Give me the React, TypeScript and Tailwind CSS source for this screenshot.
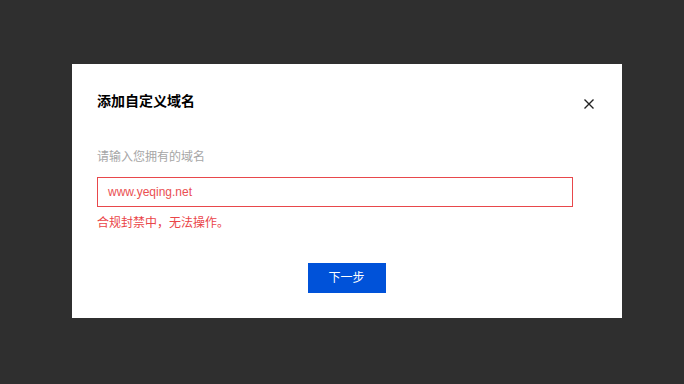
import React from 'react'

const font = { fontFamily: '"Liberation Sans", "Noto Sans CJK SC", sans-serif' }

export default function App() {
  return (
    <div className="w-[684px] h-[384px] bg-[#2f2f2f] pt-[64px] pl-[72px]" style={font}>
      <div className="w-[550px] h-[254px] bg-white flex flex-col px-[25px] pt-[26px]">
        <div className="flex items-center justify-between h-[22px]">
          <div className="text-[14px] leading-[22px] font-bold text-black">添加自定义域名</div>
          <button type="button" className="mr-[2px] mt-[6px] text-[#222]">
            <svg width="12" height="12" viewBox="0 0 12 12">
              <path d="M1.5 1.5 L10.5 10.5 M10.5 1.5 L1.5 10.5" stroke="currentColor" strokeWidth="1.4" />
            </svg>
          </button>
        </div>
        <div className="mt-[35px] text-[12px] leading-[20px] text-[#a6a6a6]">请输入您拥有的域名</div>
        <div className="mt-[10px] w-[476px] h-[30px] border border-[#e8484b] flex items-center pl-[10px] text-[12px] text-[#ea4f52]">
          www.yeqing.net
        </div>
        <div className="mt-[6px] text-[12px] leading-[20px] text-[#ea4548]">合规封禁中，无法操作。</div>
        <div className="mt-[30px] flex justify-center">
          <button type="button" className="w-[78px] h-[30px] bg-[#0052d9] text-white text-[12px] ml-[-1px]">
            下一步
          </button>
        </div>
      </div>
    </div>
  )
}
